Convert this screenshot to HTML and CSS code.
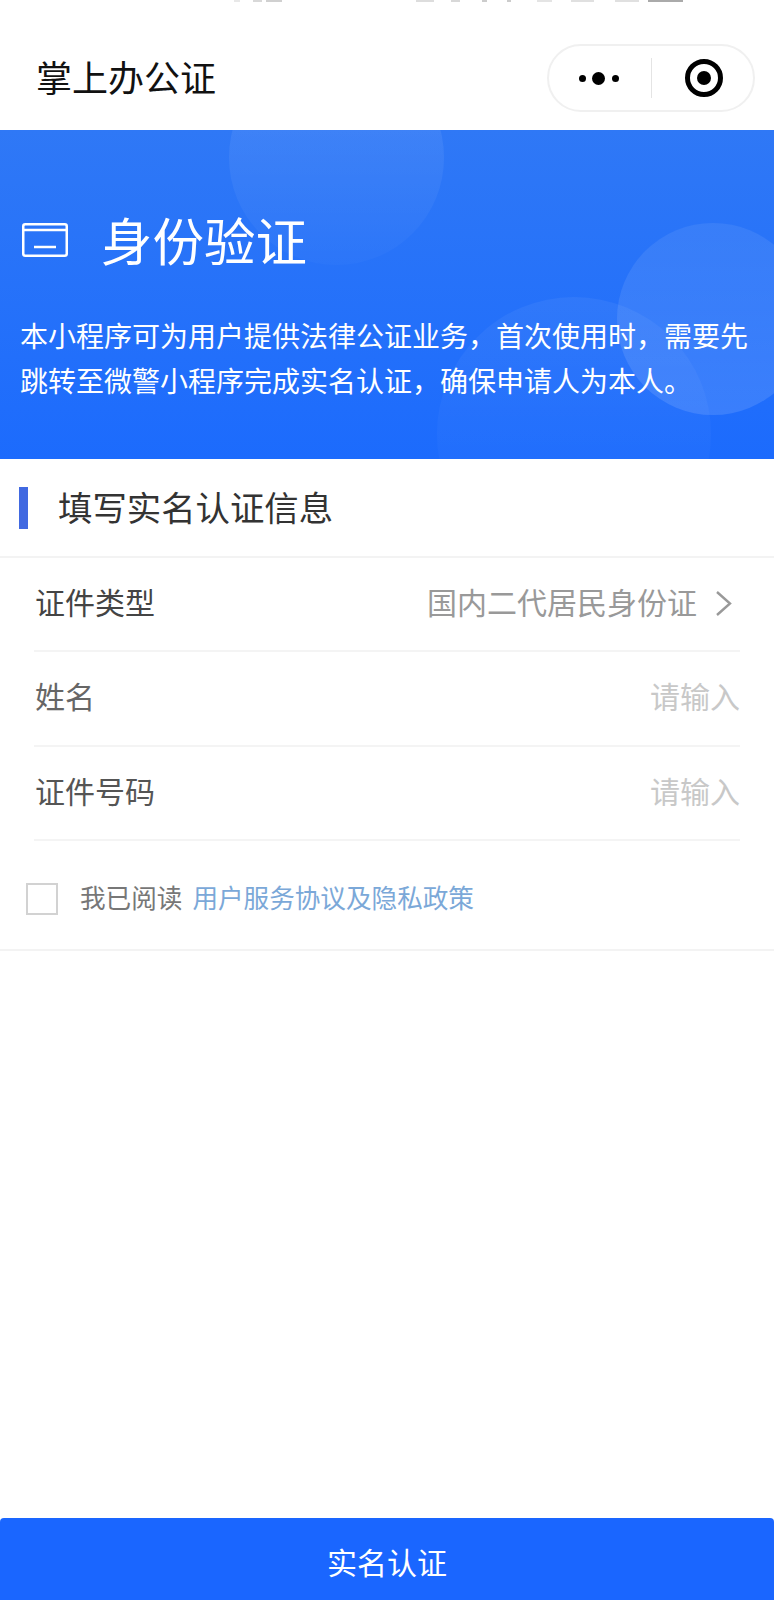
FILE: index.html
```html
<!DOCTYPE html>
<html lang="zh-CN">

<head>
    <meta charset="UTF-8">
    <meta name="viewport" content="width=device-width, initial-scale=1.0">
    <title>掌上办公证</title>
    <link rel="stylesheet" href="styles.css">
</head>

<body>
    <div class="page">
        <!-- status bar is cut off at the top of the picture, only slivers show -->
        <div class="status"></div>

        <!-- top bar with the mini program capsule -->
        <div class="nav">
            <div class="nav-title">掌上办公证</div>
            <div class="capsule">
                <div class="capsule-dots">
                    <span class="dot"></span>
                    <span class="dot dot-big"></span>
                    <span class="dot"></span>
                </div>
                <div class="capsule-line"></div>
                <div class="capsule-target">
                    <span class="target-core"></span>
                </div>
            </div>
        </div>

        <div class="banner">
            <span class="bubble bubble-top"></span>
            <span class="bubble bubble-low"></span>
            <span class="bubble bubble-right"></span>
            <div class="banner-head">
                <svg class="banner-icon" viewBox="0 0 46 34" width="46" height="34">
                    <rect x="1.25" y="1.25" width="43.5" height="31.5" rx="2" fill="none" stroke="#fff" stroke-width="2.5" />
                    <path d="M1 7H45" stroke="#fff" stroke-width="2.5" />
                    <path d="M12 24H34" stroke="#fff" stroke-width="2.5" />
                </svg>
                <h1>身份验证</h1>
            </div>
            <p>本小程序可为用户提供法律公证业务&#65292;首次使用时&#65292;需要先跳转至微警小程序完成实名认证&#65292;确保申请人为本人。</p>
        </div>

        <div class="main">
            <div class="section-title">
                <span class="section-bar"></span>
                <span class="section-name">填写实名认证信息</span>
            </div>

            <div class="form">
                <div class="row">
                    <span class="label label-dark">证件类型</span>
                    <span class="value">
                        国内二代居民身份证
                        <svg class="chevron" viewBox="0 0 17 27" width="17" height="27">
                            <path d="M2 2L15 13.5L2 25" fill="none" stroke="#999" stroke-width="2.4" />
                        </svg>
                    </span>
                </div>
                <div class="row">
                    <span class="label">姓名</span>
                    <span class="hint">请输入</span>
                </div>
                <div class="row">
                    <span class="label label-dark2">证件号码</span>
                    <span class="hint">请输入</span>
                </div>
            </div>

            <div class="agree">
                <span class="checkbox"></span>
                <span class="agree-text">我已阅读</span>
                <span class="agree-link">用户服务协议及隐私政策</span>
            </div>
        </div>

        <div class="submit">实名认证</div>
    </div>
</body>

</html>
```

FILE: styles.css
```css
*,
*::before {
    box-sizing: border-box;
}

body {
    margin: 0;
    background-color: #fff;
    font-family: "Noto Sans CJK SC", "Noto Sans", sans-serif;
}

.page {
    display: flex;
    flex-direction: column;
    height: 1600px;
    overflow: hidden;
}

.status {
    height: 3px;
    background: linear-gradient(90deg,
            transparent 234px, #e8e8e8 234px, #e8e8e8 240px, transparent 240px,
            transparent 253px, #d8d8d8 253px, #d8d8d8 262px, transparent 262px,
            transparent 266px, #d0d0d0 266px, #d0d0d0 282px, transparent 282px,
            transparent 416px, #ddd 416px, #ddd 434px, transparent 434px,
            transparent 451px, #d8d8d8 451px, #d8d8d8 460px, transparent 460px,
            transparent 482px, #ccc 482px, #ccc 487px, transparent 487px,
            transparent 507px, #ccc 507px, #ccc 511px, transparent 511px,
            transparent 537px, #e4e4e4 537px, #e4e4e4 552px, transparent 552px,
            transparent 571px, #e0e0e0 571px, #e0e0e0 594px, transparent 594px,
            transparent 615px, #e0e0e0 615px, #e0e0e0 639px, transparent 639px,
            transparent 648px, #aaa 648px, #aaa 683px, transparent 683px) no-repeat 0 0 / 100% 2px;
}

/* nav */
.nav {
    display: flex;
    align-items: center;
    justify-content: space-between;
    height: 127px;
    padding: 23px 19px 0 36px;
}

.nav-title {
    margin-bottom: 4px;
    font-size: 36px;
    line-height: 50px;
    color: #111;
}

.capsule {
    display: flex;
    align-items: center;
    width: 208px;
    height: 68px;
    border: 2px solid #f0f0f0;
    border-radius: 34px;
}

.capsule-dots {
    display: flex;
    align-items: center;
    justify-content: center;
    gap: 6.5px;
    width: 99px;
    margin-right: 3px;
}

.dot {
    width: 7px;
    height: 7px;
    border-radius: 50%;
    background-color: #000;
}

.dot-big {
    width: 13px;
    height: 13px;
}

.capsule-line {
    width: 1px;
    height: 40px;
    background-color: #e4e4e4;
}

.capsule-target {
    position: relative;
    display: flex;
    align-items: center;
    justify-content: center;
    flex: 1;
    padding-left: 2px;
}

.capsule-target::before {
    content: "";
    width: 38px;
    height: 38px;
    border: 5px solid #000;
    border-radius: 50%;
}

.target-core {
    position: absolute;
    top: 50%;
    left: 50%;
    width: 14px;
    height: 14px;
    margin: -7px 0 0 -6px;
    border-radius: 50%;
    background-color: #000;
}

/* banner */
.banner {
    position: relative;
    height: 329px;
    overflow: hidden;
    padding: 93px 20px 0 22px;
    background: linear-gradient(180deg, #2f78f6 0%, #1c6bfd 100%);
    color: #fff;
}

.bubble {
    position: absolute;
    border-radius: 50%;
}

.bubble-top {
    top: -80px;
    left: 229px;
    width: 215px;
    height: 215px;
    background: linear-gradient(180deg, rgba(255, 255, 255, 0.08) 30%, rgba(255, 255, 255, 0.02) 100%);
}

.bubble-low {
    top: 167px;
    left: 437px;
    width: 274px;
    height: 274px;
    background: linear-gradient(180deg, rgba(255, 255, 255, 0.05) 0%, rgba(255, 255, 255, 0.015) 70%);
}

.bubble-right {
    top: 93px;
    left: 617px;
    width: 192px;
    height: 192px;
    background: linear-gradient(180deg, rgba(255, 255, 255, 0.07) 0%, rgba(255, 255, 255, 0.12) 100%);
}

.banner-head {
    position: relative;
    display: flex;
    align-items: center;
    gap: 33px;
    height: 34px;
}

.banner-head h1 {
    margin: -3px 0 0;
    font-size: 51.5px;
    font-weight: 400;
    line-height: 60px;
}

.banner p {
    position: relative;
    width: 730px;
    margin: 56px 0 0 -2px;
    font-size: 28px;
    line-height: 45px;
}

/* form */
.main {
    flex: 1;
}

.section-title {
    display: flex;
    align-items: center;
    gap: 30px;
    height: 99px;
    padding-left: 19px;
    border-bottom: 2px solid #f3f3f3;
    font-size: 34.4px;
    color: #333;
}

.section-bar {
    width: 9px;
    height: 42px;
    margin-top: 1px;
    background-color: #4169e1;
}

.section-name {
    margin-bottom: 4px;
}

.form {
    padding: 0 34px;
}

.row {
    display: flex;
    align-items: center;
    justify-content: space-between;
    height: 94.33px;
    padding-bottom: 6px;
    border-bottom: 2px solid #f4f4f4;
    font-size: 30px;
}

.label {
    color: #666;
    margin-left: 1px;
}

.label-dark {
    color: #444;
}

.label-dark2 {
    color: #555;
}

.value {
    display: flex;
    align-items: center;
    gap: 18px;
    margin-right: 8px;
    color: #999;
}

.chevron {
    margin-top: 5px;
}

.hint {
    color: #c8c8c8;
}

.agree {
    display: flex;
    align-items: center;
    height: 110px;
    padding: 8px 0 0 26px;
    border-bottom: 2px solid #f3f3f3;
    font-size: 25.6px;
}

.checkbox {
    width: 32px;
    height: 32px;
    margin-right: 22px;
    border: 2.5px solid #d2d2d2;
}

.agree-text {
    margin: 0 10px 4px 0;
    color: #777;
}

.agree-link {
    margin-bottom: 4px;
    color: #7ba8d8;
}

/* bottom button */
.submit {
    display: flex;
    align-items: center;
    justify-content: center;
    height: 82px;
    padding-top: 4px;
    border-radius: 4px 4px 0 0;
    background-color: #1a66ff;
    color: #fff;
    font-size: 30px;
}
```
